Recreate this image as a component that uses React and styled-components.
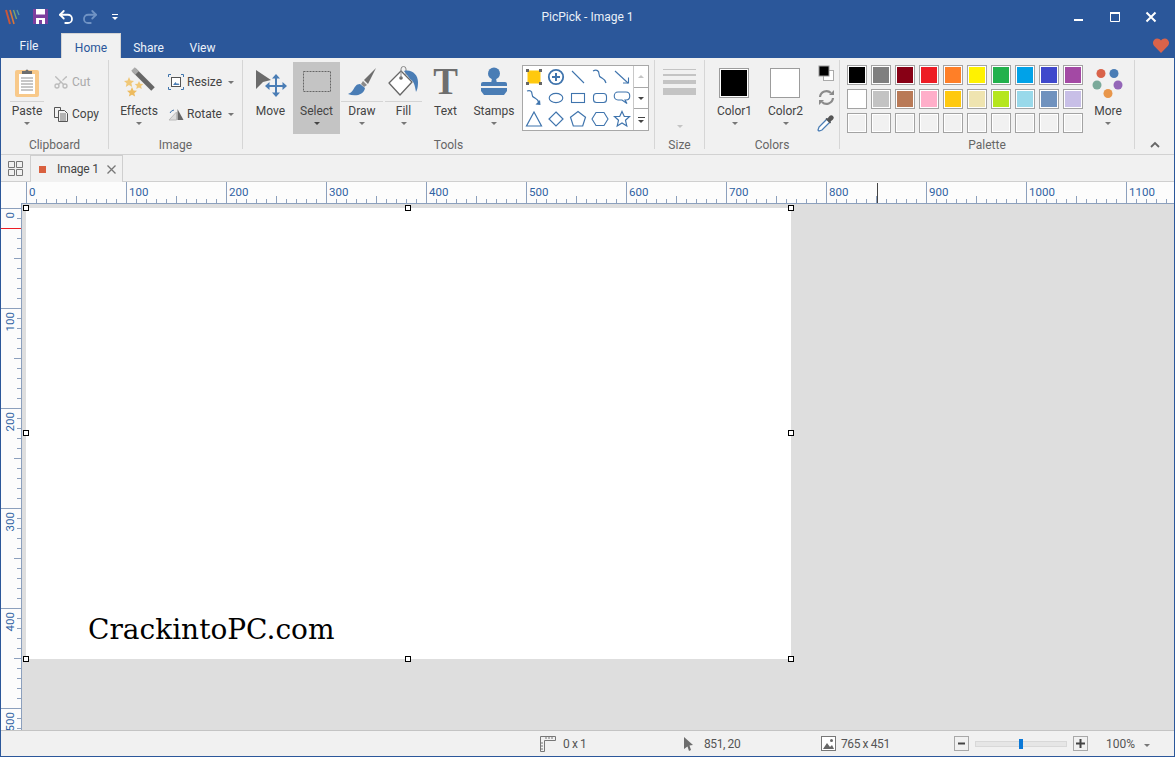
import React from "react";
import styled, { createGlobalStyle } from "styled-components";
import { Undo2, Redo2, Scissors } from "lucide-react";

const BLUE = "#2b579a";
const ICON_BLUE = "#4a7db5";
const ICON_GREY = "#6e6e6e";
const TICK = "#8ca0bd";

const row1 = ["#000000", "#7f7f7f", "#880015", "#ed1c24", "#ff7f27", "#fff200", "#22b14c", "#00a2e8", "#3f48cc", "#a349a4"];
const row2 = ["#ffffff", "#c3c3c3", "#b97a57", "#ffaec9", "#ffc90e", "#efe4b0", "#b5e61d", "#99d9ea", "#7092be", "#c8bfe7"];
const row3 = Array(10).fill("#f1f1f1");
const hLabels = [0, 100, 200, 300, 400, 500, 600, 700, 800, 900, 1000, 1100];
const vLabels = [0, 100, 200, 300, 400, 500];

const shapes = [
  <><rect x="2.5" y="2.5" width="13" height="13" fill="#ffc90e" /><path d="M1 1h3v3H1zM14 1h3v3h-3zM1 14h3v3H1zM14 14h3v3h-3z" fill="#666" /></>,
  <><circle cx="9" cy="9" r="7.2" fill="none" stroke="#3f74ad" strokeWidth="1.8" /><path d="M9 5v8M5 9h8" stroke="#3f74ad" strokeWidth="2" /></>,
  <path d="M3 3l12 12" stroke="#3f74ad" strokeWidth="1.1" />,
  <path d="M2 3c4-2 6 0 6 3s1 3 3 4 3 2 4 5" fill="none" stroke="#3f74ad" strokeWidth="1.2" />,
  <><path d="M2 3l13 12" stroke="#3f74ad" strokeWidth="1.1" /><path d="M10 15h5.5V9.5" fill="none" stroke="#3f74ad" strokeWidth="1.1" /></>,
  <><path d="M2 2c3-1 5 0 5 3s1 3 3 4 3 2 4 5" fill="none" stroke="#3f74ad" strokeWidth="1.2" /><path d="M10.5 15.5l5 .5-.5-5z" fill="#3f74ad" /></>,
  <ellipse cx="9" cy="9" rx="6.8" ry="4.6" fill="none" stroke="#3f74ad" strokeWidth="1.1" />,
  <rect x="2.5" y="4.5" width="13" height="9" fill="none" stroke="#3f74ad" strokeWidth="1.1" />,
  <rect x="2.5" y="4.5" width="13" height="9" rx="3" fill="none" stroke="#3f74ad" strokeWidth="1.1" />,
  <path d="M5 3h8c5 0 5 8 0 8h-1l2 3.5-5-3.5H5C0 11 0 3 5 3z" fill="none" stroke="#3f74ad" strokeWidth="1.1" />,
  <path d="M9 2l7.5 14h-15z" fill="none" stroke="#3f74ad" strokeWidth="1.2" />,
  <path d="M9 2l7 7-7 7-7-7z" fill="none" stroke="#3f74ad" strokeWidth="1.2" />,
  <path d="M9 1.5l7.5 5.8-2.800 8.700H4.300L1.500 7.300z" fill="none" stroke="#3f74ad" strokeWidth="1.2" />,
  <path d="M5 2.5h8L17 9l-4 6.5H5L1 9z" fill="none" stroke="#3f74ad" strokeWidth="1.1" />,
  <path d="M9 1.5l2.3 5h5.2l-4 3.800 1.300 5.600L9 13l-4.800 2.900 1.300-5.600-4-3.800h5.200z" fill="none" stroke="#3f74ad" strokeWidth="1.2" />,
];

// selection handles, in pixels on the 765x451 page
const handleSpots = [
  [0, 0], [382, 0], [765, 0],
  [0, 225], [765, 225],
  [0, 451], [382, 451], [765, 451],
];

const App = () => (
  <Window>
    <GlobalStyle />
    <TitleBar>
      <QuickAccess>
        <svg width="18" height="18" viewBox="0 0 18 18">
          <path d="M2 2l4 14" stroke="#c9573a" strokeWidth="2" />
          <path d="M6 2l4 14" stroke="#d9763a" strokeWidth="1.6" />
          <path d="M9.5 2l3 9" stroke="#7fa36a" strokeWidth="1.4" />
          <path d="M13 2l2 5" stroke="#5e9c9a" strokeWidth="1.3" />
        </svg>
        <QuickSlot $left={11}>
          <svg width="15" height="15" viewBox="0 0 15 15">
            <rect width="15" height="15" fill="#7d3f9e" />
            <rect x="3" y="0" width="9" height="5.5" fill="#fff" />
            <rect x="3" y="9" width="9" height="6" fill="#fff" />
            <rect x="6" y="11" width="3" height="4" fill="#7d3f9e" />
          </svg>
        </QuickSlot>
        <QuickSlot $left={9}><Undo2 size={18} color="#fff" strokeWidth={2.4} /></QuickSlot>
        <QuickSlot $left={6}><Redo2 size={18} color="#7093c4" strokeWidth={2.4} /></QuickSlot>
        <QuickMenu />
      </QuickAccess>
      <WindowTitle>PicPick - Image 1</WindowTitle>
      <WindowButtons>
        <WindowButton>
          <svg width="12" height="12" viewBox="0 0 12 12"><rect x="1" y="8" width="9" height="2" fill="#fff" /></svg>
        </WindowButton>
        <WindowButton>
          <svg width="12" height="12" viewBox="0 0 12 12"><path d="M1.500 2.500h9v8h-9z" fill="none" stroke="#fff" /><rect x="1" y="1" width="10" height="2" fill="#fff" /></svg>
        </WindowButton>
        <WindowButton>
          <svg width="12" height="12" viewBox="0 0 12 12"><path d="M1.500 1.500l9 9M10.500 1.500l-9 9" stroke="#fff" strokeWidth="2" /></svg>
        </WindowButton>
      </WindowButtons>
    </TitleBar>

    <TabRow>
      <MenuTab $w={56} $gap={4} $top={6}>File</MenuTab>
      <MenuTab $w={60} $top={7} $active>Home</MenuTab>
      <MenuTab $w={55} $top={8}>Share</MenuTab>
      <MenuTab $w={53} $top={8}>View</MenuTab>
      <Heart>
        <svg width="16" height="15" viewBox="0 0 16 15">
          <path d="M8 15L1.200 8C-1.500 4.800.6.400 4.200.4 5.800.4 7.200 1.200 8 2.600 8.800 1.200 10.200.4 11.800.4c3.600 0 5.700 4.400 3 7.600z" fill="#d9634a" />
        </svg>
      </Heart>
    </TabRow>

    <Ribbon>
      <Group $w={108} $pad={8}>
        <GroupBody>
          <BigButton $w={36}>
            <IconSlot>
              <svg width="26" height="30" viewBox="0 0 26 30">
                <rect x="1" y="3" width="24" height="27" rx="2" fill="#f8c98a" />
                <rect x="5" y="7" width="16" height="20" fill="#fff" />
                <path d="M7 11h12M7 14h12M7 17h12M7 20h12M7 23h12" stroke="#8f8f8f" />
                <path d="M8 7V4h3.500a1.500 1.500 0 0 1 3 0H18v3z" fill="#6d6d6d" />
              </svg>
            </IconSlot>
            <BigLabel $split>Paste</BigLabel>
            <Caret />
          </BigButton>
          <SmallColumn $left={7}>
            <SmallButton $disabled>
              <SmallIcon><CutIcon size={16} color="#bcbcbc" /></SmallIcon>Cut
            </SmallButton>
            <SmallButton>
              <SmallIcon>
                <svg width="16" height="16" viewBox="0 0 16 16" fill="none" stroke="#555">
                  <path d="M1.500 1.500h6v3h-1M1.500 1.500v10h4" />
                  <path d="M5.500 4.500h6l3 3v8h-9z" fill="#f1f1f1" />
                  <path d="M7 8h6M7 10h6M7 12h6M7 14h6" stroke="#777" />
                </svg>
              </SmallIcon>
              Copy
            </SmallButton>
          </SmallColumn>
        </GroupBody>
        <GroupLabel>Clipboard</GroupLabel>
      </Group>

      <Group $w={134} $pad={10}>
        <GroupBody>
          <BigButton $w={40}>
            <IconSlot>
              <svg width="34" height="30" viewBox="0 0 34 30">
                <path d="M12 3l19 19" stroke="#666" strokeWidth="5" />
                <path d="M11 2l4 4" stroke="#aaa" strokeWidth="5" />
                <path d="M7 10l1.500 3.500 3.500.4-2.600 2.400.8 3.700L7 18l-3.200 2 .8-3.700L2 13.900l3.500-.4z" fill="#f0c878" />
                <path d="M17 14l1.300 2.700 3 .3-2.200 2 .6 3-2.700-1.500-2.700 1.500.6-3-2.200-2 3-.3z" fill="#f0c878" />
                <path d="M10 20l1.500 3.400 3.500.4-2.700 2.400.8 3.400-3.100-1.800-3.100 1.800.8-3.400L5 23.800l3.500-.4z" fill="#edbb5f" />
              </svg>
            </IconSlot>
            <BigLabel>Effects</BigLabel>
            <Caret />
          </BigButton>
          <SmallColumn $left={8}>
            <SmallButton $w={70}>
              <SmallIcon>
                <svg width="16" height="16" viewBox="0 0 16 16">
                  <rect x="3.500" y="3.500" width="9" height="9" fill="#fff" stroke="#555" />
                  <path d="M5 11l2.500-3 1.500 2 1-1 1.500 2z" fill="#4a7db5" />
                  <path d="M.5 3V.5H3M13 .5h2.500V3M15.500 13v2.500H13M3 15.500H.5V13" fill="none" stroke="#3f74ad" />
                </svg>
              </SmallIcon>
              Resize<SideCaret />
            </SmallButton>
            <SmallButton $w={70}>
              <SmallIcon>
                <svg width="16" height="16" viewBox="0 0 16 16">
                  <path d="M1 14L8.500 6v8z" fill="#ddd" stroke="#bbb" />
                  <path d="M9.500 3L15.500 14h-6z" fill="#666" />
                  <path d="M2 7a5 5 0 0 1 4-3" fill="none" stroke="#3f74ad" />
                </svg>
              </SmallIcon>
              Rotate<SideCaret />
            </SmallButton>
          </SmallColumn>
        </GroupBody>
        <GroupLabel>Image</GroupLabel>
      </Group>

      <Group $w={412} $pad={5}>
        <GroupBody>
          <BigButton $w={45}>
            <IconSlot>
              <svg width="32" height="30" viewBox="0 0 32 30">
                <path d="M1 3l15 10-8 2-7 7z" fill="#6b6b6b" />
                <path d="M21 10v18M12 19h18" stroke={ICON_BLUE} strokeWidth="2" />
                <path d="M21 7l4 4.500h-8zM21 30l4-4.500h-8zM10 19l4.500-4v8zM32 19l-4.500-4v8z" fill={ICON_BLUE} />
              </svg>
            </IconSlot>
            <BigLabel>Move</BigLabel>
          </BigButton>
          <BigButton $w={47} $selected>
            <IconSlot>
              <svg width="30" height="24" viewBox="0 0 30 24">
                <rect x="1.500" y="1.500" width="27" height="20" fill="none" stroke="#666" strokeDasharray="2 1" />
              </svg>
            </IconSlot>
            <BigLabel>Select</BigLabel>
            <Caret $dark />
          </BigButton>
          <BigButton $w={44}>
            <IconSlot>
              <svg width="30" height="30" viewBox="0 0 30 30">
                <path d="M29 1L17 13l4 4z" fill="#6e6e6e" />
                <path d="M16 14l-2 3 3 3 3-2z" fill="#8a8a8a" />
                <path d="M13 17c-4 0-5 3-7 6-1 2-3 3-5 4 7 3 16 1 17-6z" fill={ICON_BLUE} />
              </svg>
            </IconSlot>
            <BigLabel $split>Draw</BigLabel>
            <Caret />
          </BigButton>
          <BigButton $w={39}>
            <IconSlot>
              <svg width="31" height="31" viewBox="0 0 31 31">
                <path d="M1 17L13 5l11 11-12 13z" fill="#fff" stroke="#666" strokeWidth="1.300" strokeLinejoin="round" />
                <circle cx="13" cy="12" r="1.800" fill="#666" />
                <path d="M13 12V3a2.500 2.500 0 0 1 5 0v6" fill="none" stroke="#888" />
                <path d="M16 5c8-2 14 4 14 11 0 6-1 8-2 10-1-6-2-11-6-13z" fill={ICON_BLUE} />
              </svg>
            </IconSlot>
            <BigLabel $split>Fill</BigLabel>
            <Caret />
          </BigButton>
          <BigButton $w={45}>
            <IconSlot><TextGlyph>T</TextGlyph></IconSlot>
            <BigLabel>Text</BigLabel>
          </BigButton>
          <BigButton $w={52}>
            <IconSlot>
              <svg width="30" height="30" viewBox="0 0 30 30">
                <circle cx="15" cy="6.500" r="6" fill={ICON_BLUE} />
                <path d="M13 11h4l1 6h-6z" fill={ICON_BLUE} />
                <path d="M2 17a2 2 0 0 1 2-2h22a2 2 0 0 1 2 2v2H2z" fill={ICON_BLUE} />
                <path d="M2 21h26v3l-3 4H5l-3-4z" fill={ICON_BLUE} />
              </svg>
            </IconSlot>
            <BigLabel>Stamps</BigLabel>
            <Caret />
          </BigButton>
          <Gallery>
            <GalleryGrid>
              {shapes.map((shape, i) => (
                <GalleryCell key={i}><svg width="18" height="18" viewBox="0 0 18 18">{shape}</svg></GalleryCell>
              ))}
            </GalleryGrid>
            <GalleryScroll>
              <ScrollButton><UpCaret /></ScrollButton>
              <ScrollButton><Caret $dark /></ScrollButton>
              <ScrollButton><MoreLine /><Caret $dark /></ScrollButton>
            </GalleryScroll>
          </Gallery>
        </GroupBody>
        <GroupLabel>Tools</GroupLabel>
      </Group>

      <Group $w={50} $pad={8}>
        <GroupBody>
          <SizeButton>
            <SizeLines>
              <SizeLine $h={1} />
              <SizeLine $h={2} />
              <SizeLine $h={4} />
              <SizeLine $h={7} />
            </SizeLines>
            <Caret $faded />
          </SizeButton>
        </GroupBody>
        <GroupLabel>Size</GroupLabel>
      </Group>

      <Group $w={135} $pad={4}>
        <GroupBody>
          <BigButton $w={51}>
            <IconSlot><ColorBox $color="#000" /></IconSlot>
            <BigLabel>Color1</BigLabel>
            <Caret />
          </BigButton>
          <BigButton $w={51}>
            <IconSlot><ColorBox $color="#fff" /></IconSlot>
            <BigLabel>Color2</BigLabel>
            <Caret />
          </BigButton>
          <ColorTools>
            <svg width="16" height="16" viewBox="0 0 16 16">
              <rect x="5.500" y="5.500" width="10" height="10" fill="#fff" stroke="#aaa" />
              <rect x="1" y="1" width="10" height="10" fill="#000" stroke="#999" />
            </svg>
            <svg width="17" height="17" viewBox="0 0 17 17" fill="none" stroke="#8a8a8a" strokeWidth="2.200">
              <path d="M2 8a6.500 6.500 0 0 1 11-4" />
              <path d="M15 9a6.500 6.500 0 0 1-11 4" />
              <path d="M16 1v5h-5zM1 16v-5h5z" fill="#8a8a8a" stroke="none" />
            </svg>
            <svg width="18" height="18" viewBox="0 0 18 18">
              <path d="M10 5l3 3-8 8-3 1-1-1 1-3z" fill="#fff" stroke={ICON_BLUE} strokeWidth="1.300" />
              <path d="M8.500 5l1-1 1 .5 2-2.500a2.300 2.300 0 0 1 3.500 3.500L13.500 7.500l.5 1-1 1z" fill="#555" />
            </svg>
          </ColorTools>
        </GroupBody>
        <GroupLabel>Colors</GroupLabel>
      </Group>

      <Group $w={295} $pad={7}>
        <GroupBody>
          <PaletteGrid>
            {[...row1, ...row2, ...row3].map((color, i) => (
              <PaletteSwatch key={i} $color={color} />
            ))}
          </PaletteGrid>
          <BigButton $w={36} $left={7}>
            <IconSlot>
              <svg width="32" height="32" viewBox="0 0 32 32">
                <circle cx="9" cy="7.500" r="4.500" fill="#d9634a" />
                <circle cx="22" cy="7.500" r="4.500" fill="#4a7db5" />
                <circle cx="5" cy="19" r="4.500" fill="#7aa99a" />
                <circle cx="26" cy="19" r="4.500" fill="#9466b8" />
                <circle cx="16" cy="27.500" r="4.500" fill="#e8964a" />
              </svg>
            </IconSlot>
            <BigLabel>More</BigLabel>
            <Caret />
          </BigButton>
        </GroupBody>
        <GroupLabel>Palette</GroupLabel>
      </Group>

      <Collapse>
        <svg width="10" height="7" viewBox="0 0 10 7"><path d="M1 6l4-4 4 4" fill="none" stroke="#666" strokeWidth="1.800" /></svg>
      </Collapse>
    </Ribbon>

    <DocStrip>
      <GridToggle>
        <svg width="15" height="15" viewBox="0 0 15 15" fill="none" stroke="#777">
          <path d="M.5.500h6v6h-6zM8.500.500h6v6h-6zM.5 8.500h6v6h-6zM8.500 8.500h6v6h-6z" />
        </svg>
      </GridToggle>
      <DocTab>
        <DocMark />
        <DocName>Image 1</DocName>
        <svg width="9" height="9" viewBox="0 0 9 9"><path d="M.5.500l8 8M8.500.500l-8 8" stroke="#777" strokeWidth="1.300" /></svg>
      </DocTab>
    </DocStrip>

    <HRuler>
      {hLabels.map((n) => (
        <HCell key={n}>{n}</HCell>
      ))}
      <HMark />
    </HRuler>

    <Workspace>
      <VRuler>
        {vLabels.map((n) => (
          <VCell key={n}><VText>{n}</VText></VCell>
        ))}
        <VMark />
      </VRuler>
      <Canvas>
        <Page>
          <Watermark>CrackintoPC.com</Watermark>
          {handleSpots.map(([x, y]) => (
            <Handle key={`${x}-${y}`} style={{ left: x, top: y }} />
          ))}
        </Page>
      </Canvas>
    </Workspace>

    <StatusBar>
      <StatusItem $w={144}>
        <svg width="16" height="16" viewBox="0 0 16 16" fill="none" stroke="#777">
          <path d="M.5 15.500V.5h15v4h-11v11z" />
          <path d="M6 1v2M9 1v2M12 1v2M1 7h2M1 10h2M1 13h2" />
        </svg>
        <StatusText>0 x 1</StatusText>
      </StatusItem>
      <StatusItem $w={137} $gap={11}>
        <svg width="9" height="14" viewBox="0 0 9 14"><path d="M0 0l9 8-3.500.5L7 13l-2 1-1.500-4.500L0 12z" fill="#6e6e6e" /></svg>
        <StatusText>851, 20</StatusText>
      </StatusItem>
      <StatusItem $w={133} $gap={5}>
        <svg width="15" height="15" viewBox="0 0 15 15">
          <rect x=".5" y=".5" width="14" height="14" fill="#fff" stroke="#777" />
          <path d="M2 13l4-6 3 4 2-2 2 4z" fill="#666" />
          <circle cx="10.500" cy="4.500" r="1.500" fill="#666" />
        </svg>
        <StatusText>765 x 451</StatusText>
      </StatusItem>
      <ZoomButton>
        <svg width="9" height="9" viewBox="0 0 9 9"><path d="M1 4.500h7" stroke="#444" strokeWidth="2" /></svg>
      </ZoomButton>
      <ZoomTrack><ZoomThumb /></ZoomTrack>
      <ZoomButton>
        <svg width="9" height="9" viewBox="0 0 9 9"><path d="M0 4.500h9M4.500 0v9" stroke="#444" strokeWidth="2" /></svg>
      </ZoomButton>
      <ZoomValue>100%</ZoomValue>
      <Caret />
    </StatusBar>
  </Window>
);

export default App;

const GlobalStyle = createGlobalStyle`
  html, body, #root {
    margin: 0;
    padding: 0;
    height: 100%;
    overflow: hidden;
  }
  body {
    font-family: Roboto, "Liberation Sans", sans-serif;
    font-size: 12px;
    color: #444;
  }
`;

const Window = styled.div`
  box-sizing: border-box;
  width: 1175px;
  height: 757px;
  display: flex;
  flex-direction: column;
  border: 1px solid ${BLUE};
  border-top: 0;
  background: #f1f1f1;
  overflow: hidden;
`;

const TitleBar = styled.div`
  height: 33px;
  flex: none;
  display: grid;
  grid-template-columns: 1fr auto 1fr;
  align-items: center;
  background: ${BLUE};
`;

const QuickAccess = styled.div`
  display: flex;
  align-items: center;
  padding-left: 3px;
`;

const QuickSlot = styled.div`
  display: flex;
  margin-left: ${(p) => p.$left}px;
`;

const QuickMenu = styled.div`
  margin-left: 13px;
  width: 6px;
  height: 5px;
  border-top: 1px solid #fff;
  position: relative;
  &::after {
    content: "";
    position: absolute;
    top: 2px;
    left: 0;
    border: 3px solid transparent;
    border-top-color: #fff;
  }
`;

const WindowTitle = styled.div`
  color: #eaf0f8;
  font-size: 12px;
`;

const WindowButtons = styled.div`
  display: flex;
  justify-content: flex-end;
  padding-right: 5px;
`;

const WindowButton = styled.div`
  width: 36px;
  height: 28px;
  display: flex;
  align-items: center;
  justify-content: center;
`;

const TabRow = styled.div`
  height: 25px;
  flex: none;
  display: flex;
  background: ${BLUE};
`;

const MenuTab = styled.div`
  box-sizing: border-box;
  width: ${(p) => p.$w}px;
  margin-right: ${(p) => p.$gap || 0}px;
  padding-top: ${(p) => p.$top}px;
  text-align: center;
  font-size: 12px;
  color: ${(p) => (p.$active ? BLUE : "#eef3fa")};
  background: ${(p) => (p.$active ? "#f1f1f1" : "transparent")};
  border: ${(p) => (p.$active ? "1px solid #d4d4d4" : "0")};
  border-bottom: 0;
`;

const Heart = styled.div`
  margin-left: auto;
  padding: 5px 5px 0 0;
`;

const Ribbon = styled.div`
  height: 97px;
  flex: none;
  box-sizing: border-box;
  display: flex;
  padding-top: 2px;
  background: #f1f1f1;
  border-bottom: 1px solid #d2d2d2;
`;

const Group = styled.div`
  box-sizing: border-box;
  width: ${(p) => p.$w}px;
  position: relative;
  padding-left: ${(p) => p.$pad}px;
  &::after {
    content: "";
    position: absolute;
    right: 0;
    top: 0;
    bottom: 5px;
    width: 1px;
    background: #d6d6d6;
  }
`;

const GroupBody = styled.div`
  height: 74px;
  padding-top: 2px;
  display: flex;
`;

const GroupLabel = styled.div`
  position: absolute;
  left: 0;
  right: 1px;
  top: 77px;
  line-height: 16px;
  text-align: center;
  color: #666;
  font-size: 12px;
`;

const BigButton = styled.div`
  width: ${(p) => p.$w}px;
  height: 72px;
  flex: none;
  margin-left: ${(p) => p.$left || 0}px;
  display: flex;
  flex-direction: column;
  align-items: center;
  background: ${(p) => (p.$selected ? "#c4c4c4" : "transparent")};
`;

const IconSlot = styled.div`
  height: 39px;
  display: flex;
  align-items: center;
  justify-content: center;
`;

const BigLabel = styled.div`
  align-self: stretch;
  margin: 0 ${(p) => (p.$split ? 1 : 0)}px;
  padding-top: 1px;
  border-top: 1px solid ${(p) => (p.$split ? "#d4d4d4" : "transparent")};
  line-height: 16px;
  text-align: center;
  white-space: nowrap;
`;

const Caret = styled.div`
  flex: none;
  width: 0;
  height: 0;
  margin-top: 3px;
  border: 3.5px solid transparent;
  border-bottom: 0;
  border-top-color: ${(p) => (p.$dark ? "#444" : p.$faded ? "#c4c4c4" : "#777")};
`;

const UpCaret = styled.div`
  width: 0;
  height: 0;
  border: 3.5px solid transparent;
  border-top: 0;
  border-bottom-color: #c4c4c4;
`;

const SideCaret = styled(Caret)`
  margin: 0 3px 0 auto;
`;

const SmallColumn = styled.div`
  margin: 4px 0 0 ${(p) => p.$left}px;
  display: flex;
  flex-direction: column;
`;

const SmallButton = styled.div`
  height: 32px;
  width: ${(p) => (p.$w ? `${p.$w}px` : "auto")};
  display: flex;
  align-items: center;
  color: ${(p) => (p.$disabled ? "#aaa" : "#444")};
`;

const SmallIcon = styled.span`
  display: flex;
  margin: 0 3px 0 1px;
`;

const CutIcon = styled(Scissors)`
  transform: rotate(-90deg);
`;

const TextGlyph = styled.span`
  font-family: "Liberation Serif", serif;
  font-weight: 700;
  font-size: 37px;
  line-height: 36px;
  color: ${ICON_GREY};
`;

const Gallery = styled.div`
  box-sizing: border-box;
  width: 127px;
  height: 66px;
  margin: 3px 0 0 2px;
  display: flex;
  background: #fff;
  border: 1px solid #a8a8a8;
`;

const GalleryGrid = styled.div`
  width: 110px;
  display: grid;
  grid-template-columns: repeat(5, 22px);
  grid-auto-rows: 1fr;
`;

const GalleryCell = styled.div`
  display: flex;
  align-items: center;
  justify-content: center;
`;

const GalleryScroll = styled.div`
  flex: 1;
  display: flex;
  flex-direction: column;
  border-left: 1px solid #c8c8c8;
`;

const ScrollButton = styled.div`
  flex: 1;
  display: flex;
  flex-direction: column;
  align-items: center;
  justify-content: center;
  & + & {
    border-top: 1px solid #a8a8a8;
  }
  & > div {
    margin-top: 0;
  }
`;

const MoreLine = styled.div`
  width: 7px;
  height: 1px;
  margin-bottom: 2px;
  background: #444;
`;

const SizeButton = styled.div`
  width: 33px;
  height: 72px;
  display: flex;
  flex-direction: column;
  align-items: center;
`;

const SizeLines = styled.div`
  align-self: stretch;
  height: 60px;
  padding-top: 7px;
  box-sizing: border-box;
  display: flex;
  flex-direction: column;
  gap: 4px;
`;

const SizeLine = styled.div`
  height: ${(p) => p.$h}px;
  background: #c4c4c4;
`;

const ColorBox = styled.div`
  box-sizing: border-box;
  width: 30px;
  height: 30px;
  margin: 3px 1px 0 0;
  background: ${(p) => p.$color};
  border: 1px solid #9c9c9c;
  box-shadow: inset 0 0 0 1px #fff;
`;

const ColorTools = styled.div`
  width: 18px;
  margin-left: 6px;
  padding-top: 3px;
  display: flex;
  flex-direction: column;
  align-items: center;
  gap: 8px;
`;

const PaletteGrid = styled.div`
  margin-top: 3px;
  display: grid;
  grid-template-columns: repeat(10, 20px);
  grid-auto-rows: 20px;
  gap: 4px;
`;

const PaletteSwatch = styled.div`
  box-sizing: border-box;
  background: ${(p) => p.$color};
  border: 1px solid #a3a3a3;
  box-shadow: inset 0 0 0 1px #fff;
`;

const Collapse = styled.div`
  flex: 1;
  padding-bottom: 6px;
  display: flex;
  align-items: flex-end;
  justify-content: center;
`;

const DocStrip = styled.div`
  box-sizing: border-box;
  height: 27px;
  flex: none;
  display: flex;
  background: #f1f1f1;
  border-bottom: 1px solid #cfcfcf;
`;

const GridToggle = styled.div`
  width: 29px;
  display: flex;
  align-items: center;
  justify-content: center;
`;

const DocTab = styled.div`
  box-sizing: border-box;
  width: 93px;
  height: 27px;
  padding-left: 8px;
  display: flex;
  align-items: center;
  background: #f1f1f1;
  border: 1px solid #cfcfcf;
  border-bottom: 0;
`;

const DocMark = styled.div`
  width: 7px;
  height: 7px;
  background: #d9603f;
`;

const DocName = styled.span`
  margin: 0 8px 0 11px;
  letter-spacing: -0.2px;
`;

const HRuler = styled.div`
  position: relative;
  height: 21px;
  flex: none;
  display: flex;
  padding-left: 25px;
  background: #fcfcfc;
  overflow: hidden;
`;

const HCell = styled.div`
  box-sizing: border-box;
  width: 100px;
  flex: none;
  padding: 3px 0 0 3px;
  font-size: 11.5px;
  line-height: 14px;
  color: #2f62a3;
  background:
    linear-gradient(${TICK}, ${TICK}) 0 0 / 1px 100% no-repeat,
    linear-gradient(${TICK}, ${TICK}) 50px 100% / 1px 7px no-repeat,
    repeating-linear-gradient(90deg, ${TICK} 0 1px, transparent 1px 10px) 0 100% / 100% 4px no-repeat;
`;

const HMark = styled.div`
  position: absolute;
  left: 876px;
  top: 1px;
  bottom: 0;
  width: 1px;
  background: #444;
`;

const Workspace = styled.div`
  flex: 1;
  min-height: 0;
  display: flex;
`;

const VRuler = styled.div`
  position: relative;
  width: 20px;
  flex: none;
  padding-top: 5px;
  box-sizing: border-box;
  background: #fcfcfc;
  overflow: hidden;
`;

const VCell = styled.div`
  box-sizing: border-box;
  height: 100px;
  padding: 4px 0 0 2px;
  background:
    linear-gradient(${TICK}, ${TICK}) 0 0 / 100% 1px no-repeat,
    linear-gradient(${TICK}, ${TICK}) 100% 50px / 7px 1px no-repeat,
    repeating-linear-gradient(180deg, ${TICK} 0 1px, transparent 1px 10px) 100% 0 / 4px 100% no-repeat;
`;

const VText = styled.div`
  writing-mode: vertical-rl;
  transform: rotate(180deg);
  font-size: 11.5px;
  line-height: 14px;
  color: #2f62a3;
`;

const VMark = styled.div`
  position: absolute;
  left: 0;
  right: 0;
  top: 25px;
  height: 1px;
  background: #ed1c24;
`;

const Canvas = styled.div`
  flex: 1;
  box-sizing: border-box;
  padding: 4px;
  background: #dedede;
  border-top: 1px solid ${TICK};
  border-left: 1px solid ${TICK};
`;

const Page = styled.div`
  position: relative;
  box-sizing: border-box;
  width: 765px;
  height: 451px;
  padding: 0 0 9px 62px;
  display: flex;
  align-items: flex-end;
  background: #fff;
`;

const Watermark = styled.div`
  font-family: "DejaVu Serif", "Liberation Serif", serif;
  font-size: 28px;
  line-height: 40px;
  color: #000;
`;

const Handle = styled.div`
  position: absolute;
  box-sizing: border-box;
  width: 6px;
  height: 6px;
  margin: -3px 0 0 -3px;
  background: #fff;
  border: 1px solid #000;
`;

const StatusBar = styled.div`
  box-sizing: border-box;
  height: 26px;
  flex: none;
  padding-left: 539px;
  display: flex;
  align-items: center;
  background: #f1f1f1;
  border-top: 1px solid #c4c4c4;
`;

const StatusItem = styled.div`
  width: ${(p) => p.$w}px;
  display: flex;
  align-items: center;
  gap: ${(p) => p.$gap || 7}px;
`;

const StatusText = styled.span`
  color: #555;
  font-size: 12px;
  letter-spacing: -0.4px;
`;

const ZoomButton = styled.div`
  box-sizing: border-box;
  width: 15px;
  height: 15px;
  display: flex;
  align-items: center;
  justify-content: center;
  background: #f1f1f1;
  border: 1px solid #a8a8a8;
`;

const ZoomTrack = styled.div`
  position: relative;
  box-sizing: border-box;
  width: 92px;
  height: 6px;
  margin: 0 6px;
  background: #e6e6e6;
  border: 1px solid #d8d8d8;
`;

const ZoomThumb = styled.div`
  position: absolute;
  left: 43px;
  top: -3px;
  width: 4px;
  height: 10px;
  background: #0a78d7;
`;

const ZoomValue = styled.span`
  margin: 0 9px 0 18px;
  color: #555;
`;
